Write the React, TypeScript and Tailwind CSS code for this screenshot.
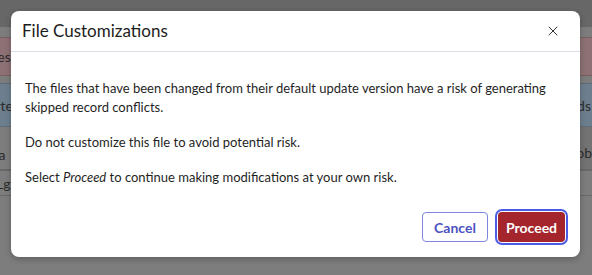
import { X } from "lucide-react";

export default function App() {
  return (
    <div className="relative w-[592px] h-[275px] overflow-hidden bg-[#7d7d7d] font-['Lato','Liberation_Sans',sans-serif]">
      {/* Page behind the overlay */}
      <div className="flex flex-col text-[14px] text-[#2b2b2b]">
        <div className="h-[27px] bg-[#676767]" />
        <div className="h-[10px]" />
        <div className="h-[39px] bg-[#8d7174] border-y border-[#7a5f62] flex items-center justify-between">
          <span className="-ml-[14px]">files.</span>
          <span />
        </div>
        <div className="h-[7px]" />
        <div className="h-[44px] bg-[#6d7f8e] border-y border-[#5d6d7b] flex items-center justify-between">
          <span className="-ml-[20px]">Sorted</span>
          <span className="mr-[1px]">Records</span>
        </div>
        <div className="h-[43px] border-b border-[#686868] flex items-center justify-between bg-[linear-gradient(to_right,transparent_50%,#737373_50%)]">
          <span className="-ml-[10px] mt-[12px]">Va</span>
          <span className="mr-0 mt-[8px]">Job</span>
        </div>
        <div className="h-[26px] border-y border-[#686868] flex items-center">
          <span className="-ml-[4px]">Lg</span>
        </div>
      </div>

      {/* Dialog */}
      <div className="absolute left-[11px] top-[11px] w-[569px] h-[246px] bg-white rounded-[8px] shadow-[0_2px_6px_rgba(0,0,0,0.25)] flex flex-col">
        <div className="h-[41px] flex items-center justify-between pl-[11px] pr-[19px] border-b border-[#dcdce4]">
          <h2 className="text-[17px] text-[#1c1c1c]">File Customizations</h2>
          <button className="text-[#333]">
            <X className="w-[16px] h-[16px]" strokeWidth={1.5} />
          </button>
        </div>
        <div className="flex-1 px-[14px] pt-[27px] text-[13px] leading-[19px] text-[#1f1f1f] flex flex-col gap-[16px]">
          <p>
            The files that have been changed from their default update version have a risk of generating skipped
            record conflicts.
          </p>
          <p>Do not customize this file to avoid potential risk.</p>
          <p>
            Select <em>Proceed</em> to continue making modifications at your own risk.
          </p>
        </div>
        <div className="flex justify-end gap-[10px] px-[15px] pb-[15px]">
          <button className="w-[66px] h-[30px] rounded-[4px] border border-[#7e87dd] text-[#4b53c0] text-[14px] font-bold">
            Cancel
          </button>
          <button className="w-[67px] h-[30px] rounded-[4px] bg-[#a4262c] text-white text-[14px] font-bold ring-2 ring-[#4b5ce6] ring-offset-1 ring-offset-white">
            Proceed
          </button>
        </div>
      </div>
    </div>
  );
}
